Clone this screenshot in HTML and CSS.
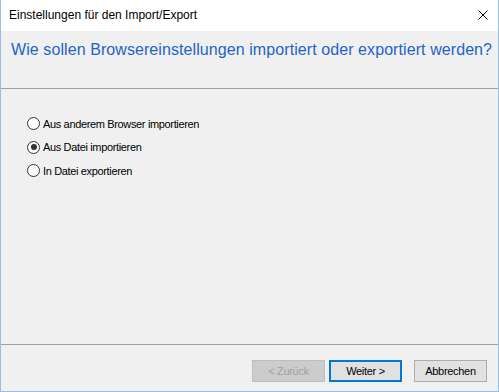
FILE: index.html
```html
<!DOCTYPE html>
<html lang="de">
<head>
<meta charset="utf-8">
<title>Einstellungen für den Import/Export</title>
<link rel="stylesheet" href="styles.css">
</head>
<body>
<div class="window">
  <div class="titlebar">
    <span class="title">Einstellungen für den Import/Export</span>
    <svg class="close" width="10" height="10" viewBox="0 0 10 10"><path d="M0.5 0.5L9.5 9.5M9.5 0.5L0.5 9.5" stroke="#000" stroke-width="1"/></svg>
  </div>
  <div class="header">
    <h1 class="heading">Wie sollen Browsereinstellungen importiert oder exportiert werden?</h1>
  </div>
  <div class="content">
    <label class="option"><span class="radio"></span>Aus anderem Browser importieren</label>
    <label class="option"><span class="radio checked"></span>Aus Datei importieren</label>
    <label class="option"><span class="radio"></span>In Datei exportieren</label>
  </div>
  <div class="footer">
    <button class="btn disabled">&lt; Zurück</button>
    <button class="btn default">Weiter &gt;</button>
    <button class="btn cancel">Abbrechen</button>
  </div>
</div>
</body>
</html>
```

FILE: styles.css
```css
* { box-sizing: border-box; }
html, body { margin: 0; padding: 0; }
body { width: 499px; height: 392px; overflow: hidden; background: #fff; }
.window {
  width: 499px; height: 392px;
  border: 1px solid #9cbde8; border-top: none;
  background: #f0f0f0;
  display: flex; flex-direction: column;
  font-family: "Liberation Sans", Arial, sans-serif;
}
.titlebar {
  height: 31px; background: #fff;
  display: flex; align-items: center; justify-content: space-between;
  padding: 0 10px 0 8px;
}
.title { font-size: 12px; color: #000; padding-bottom: 2px; }
.close { display: block; margin-top: -1px; }
.header {
  height: 58px; border-bottom: 1px solid #a0a0a0;
  padding: 10px 0 0 10px;
}
.heading {
  margin: 0; font-weight: normal; font-size: 16px; color: #1f64c5;
  letter-spacing: 0.08px;
}
.content {
  flex: 1; padding: 28px 0 0 26px;
  display: flex; flex-direction: column; gap: 10.5px;
  border-bottom: 1px solid #a0a0a0;
}
.option {
  display: flex; align-items: center; font-size: 11px; color: #000; height: 13px;
  letter-spacing: -0.35px;
}
.radio {
  width: 13px; height: 13px; border: 1px solid #333; border-radius: 50%;
  background: #fff; margin-right: 3px; position: relative; flex: none;
}
.radio.checked::after {
  content: ""; position: absolute; left: 2.5px; top: 2.5px;
  width: 6px; height: 6px; border-radius: 50%; background: #333;
}
.footer {
  height: 46px; display: flex; align-items: flex-start;
  padding: 15px 0 0 251px;
}
.btn {
  width: 73px; height: 22px; margin: 0; padding: 0;
  font-family: "Liberation Sans", Arial, sans-serif; font-size: 11px;
  letter-spacing: -0.3px;
  background: #e1e1e1; border: 1px solid #adadad; color: #000;
}
.btn.disabled { color: #a0a0a0; background: #cccccc; border-color: #bfbfbf; }
.btn.default { margin-left: 4px; border: 2px solid #0078d7; }
.btn.cancel { margin-left: 12px; }
```
